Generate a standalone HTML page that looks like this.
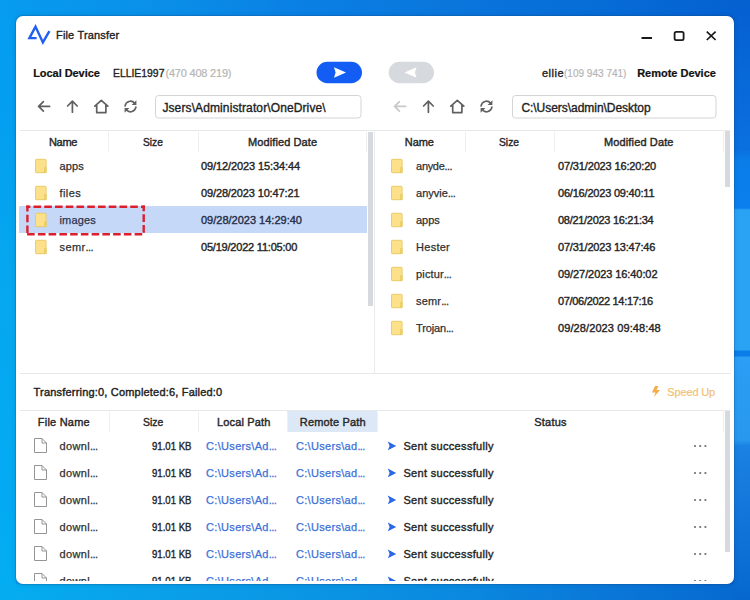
<!DOCTYPE html>
<html><head><meta charset="utf-8">
<style>
*{margin:0;padding:0;box-sizing:border-box}
html,body{width:750px;height:600px;overflow:hidden}
body{position:relative;font-family:"Liberation Sans",sans-serif;background:#0a80e6}
.a{position:absolute}
.t{position:absolute;white-space:nowrap;line-height:1}
#win{position:absolute;left:16px;top:16px;width:718px;height:568px;background:#fff;border-radius:7px;box-shadow:0 0 0 1px rgba(20,60,110,0.18),0 0 5px rgba(0,30,80,0.18)}
.hl{position:absolute;height:1px;background:#e8e8e8}
.vl{position:absolute;width:1px;background:#efefef}
</style></head><body>
<div class="a" style="left:0;top:0;width:750px;height:600px;background:linear-gradient(90deg,#069cef 0%,#0a80e4 40%,#0560d0 100%)"></div>
<div class="a" style="left:0;top:0;width:16px;height:600px;background:linear-gradient(180deg,#069cef 0px,#049ef0 100px,#06a8ef 300px,#03aaf3 500px,#04adf0 600px)"></div>
<div class="a" style="left:0;top:584px;width:750px;height:16px;background:linear-gradient(90deg,#04adf0 0px,#0aa0ea 150px,#0a96e4 300px,#0a8ae0 450px,#0a78d8 600px,#0668cf 750px)"></div>
<div class="a" style="left:0;top:0;width:750px;height:16px;background:linear-gradient(90deg,#069cef 0px,#0a90e8 150px,#0a80e4 300px,#0a76dc 450px,#066cd6 600px,#0560d0 750px)"></div>
<div class="a" style="left:734px;top:0;width:16px;height:600px;background:linear-gradient(180deg,#0560d0 0px,#0a70e0 150px,#0a7de8 160px,#0a80ee 208px,#2aa3f5 210px,#2aa3f5 350px,#0b7de8 351px,#0b7de8 356px,#2a9ff5 357px,#2898ee 440px,#1a82e2 446px,#0668cf 600px)"></div>
<div id="win"></div>
<svg class="a" style="left:0;top:0" width="750" height="581" viewBox="0 0 750 581">
<polyline points="36.6,38.1 29.4,38.1 35.5,26.6 42.9,42.4 49.4,31.2" fill="none" stroke="#1f60ee" stroke-width="2.4" stroke-linejoin="miter" stroke-linecap="butt"/>
<rect x="641.5" y="37" width="10.5" height="2" fill="#1a1a1a"/>
<rect x="674.6" y="31.8" width="9" height="8.4" rx="1.6" fill="none" stroke="#1a1a1a" stroke-width="1.8"/>
<path d="M706.8 31.6 L715.6 40 M715.6 31.6 L706.8 40" stroke="#1a1a1a" stroke-width="1.7"/>
<rect x="316.5" y="61.8" width="45.5" height="21.4" rx="10.7" fill="#135df5"/>
<path d="M334 67.2 L346 72.5 L334 77.8 L335.6 72.5 Z" fill="#fff"/>
<rect x="388.7" y="61.8" width="45.3" height="21.4" rx="10.7" fill="#d6d9de"/>
<path d="M416.5 67.2 L404.5 72.5 L416.5 77.8 L414.9 72.5 Z" fill="#fff"/>
<g fill="none" stroke="#606060" stroke-width="1.7" stroke-linecap="round" stroke-linejoin="round"><path d="M38.6 106.4 H49.6 M43.4 101.6 L38.6 106.4 L43.4 111.2"/><path d="M72.4 101.2 V112.2 M67.6 106 L72.4 101.2 L77.2 106"/><path d="M94.8 106.2 L101.3 100.4 L107.8 106.2 M96.7 105 V112.6 H105.9 V105"/><path d="M125.1 106 A5.4 5.4 0 0 1 134.6 103.2 M135.9 107 A5.4 5.4 0 0 1 126.4 109.8"/><path d="M428.4 101.2 V112.2 M423.6 106 L428.4 101.2 L433.2 106"/><path d="M450.8 106.2 L457.3 100.4 L463.8 106.2 M452.7 105 V112.6 H461.9 V105"/><path d="M481.1 106 A5.4 5.4 0 0 1 490.6 103.2 M491.9 107 A5.4 5.4 0 0 1 482.4 109.8"/></g><path d="M136.4 100.2 V105 H131.6 Z M124.6 112.8 V108 H129.4 Z" fill="#606060"/><path d="M394.6 106.4 H405.6 M399.4 101.6 L394.6 106.4 L399.4 111.2" fill="none" stroke="#c9c9c9" stroke-width="1.7" stroke-linecap="round" stroke-linejoin="round"/><path d="M492.4 100.2 V105 H487.6 Z M480.6 112.8 V108 H485.4 Z" fill="#606060"/>
<rect x="155.5" y="95.5" width="205.5" height="22.5" rx="3" fill="#fff" stroke="#d4d4d4"/>
<rect x="512.5" y="95.5" width="203.5" height="22.5" rx="3" fill="#fff" stroke="#d4d4d4"/>
<rect x="20" y="130" width="710" height="1" fill="#e8e8e8"/>
<rect x="374" y="130" width="1" height="244" fill="#ebebeb"/>
<rect x="20" y="373" width="711" height="1" fill="#e8e8e8"/>
<rect x="108" y="132" width="1" height="20" fill="#efefef"/>
<rect x="198" y="132" width="1" height="20" fill="#efefef"/>
<rect x="366" y="132" width="1" height="20" fill="#efefef"/>
<rect x="465" y="132" width="1" height="20" fill="#efefef"/>
<rect x="554" y="132" width="1" height="20" fill="#efefef"/>
<rect x="723" y="132" width="1" height="20" fill="#efefef"/>
<rect x="368" y="132" width="5" height="174" fill="#d6d9de"/>
<rect x="725" y="131" width="5" height="56" fill="#d6d9de"/>
<rect x="19" y="206" width="348" height="27" fill="#c6d8f8"/>
<rect x="35.5" y="159.3" width="10.6" height="13.4" rx="0.8" fill="#fce18a" stroke="#e6c85e" stroke-width="0.9"/><rect x="44.4" y="167.7" width="1.7" height="5" fill="#f2d264" stroke="#e6c85e" stroke-width="0.6"/>
<rect x="35.5" y="186.3" width="10.6" height="13.4" rx="0.8" fill="#fce18a" stroke="#e6c85e" stroke-width="0.9"/><rect x="44.4" y="194.7" width="1.7" height="5" fill="#f2d264" stroke="#e6c85e" stroke-width="0.6"/>
<rect x="35.5" y="213.3" width="10.6" height="13.4" rx="0.8" fill="#fce18a" stroke="#e6c85e" stroke-width="0.9"/><rect x="44.4" y="221.7" width="1.7" height="5" fill="#f2d264" stroke="#e6c85e" stroke-width="0.6"/>
<rect x="35.5" y="240.3" width="10.6" height="13.4" rx="0.8" fill="#fce18a" stroke="#e6c85e" stroke-width="0.9"/><rect x="44.4" y="248.7" width="1.7" height="5" fill="#f2d264" stroke="#e6c85e" stroke-width="0.6"/>
<rect x="391.5" y="159.3" width="10.6" height="13.4" rx="0.8" fill="#fce18a" stroke="#e6c85e" stroke-width="0.9"/><rect x="400.4" y="167.7" width="1.7" height="5" fill="#f2d264" stroke="#e6c85e" stroke-width="0.6"/>
<rect x="391.5" y="186.3" width="10.6" height="13.4" rx="0.8" fill="#fce18a" stroke="#e6c85e" stroke-width="0.9"/><rect x="400.4" y="194.7" width="1.7" height="5" fill="#f2d264" stroke="#e6c85e" stroke-width="0.6"/>
<rect x="391.5" y="213.3" width="10.6" height="13.4" rx="0.8" fill="#fce18a" stroke="#e6c85e" stroke-width="0.9"/><rect x="400.4" y="221.7" width="1.7" height="5" fill="#f2d264" stroke="#e6c85e" stroke-width="0.6"/>
<rect x="391.5" y="240.3" width="10.6" height="13.4" rx="0.8" fill="#fce18a" stroke="#e6c85e" stroke-width="0.9"/><rect x="400.4" y="248.7" width="1.7" height="5" fill="#f2d264" stroke="#e6c85e" stroke-width="0.6"/>
<rect x="391.5" y="267.3" width="10.6" height="13.4" rx="0.8" fill="#fce18a" stroke="#e6c85e" stroke-width="0.9"/><rect x="400.4" y="275.7" width="1.7" height="5" fill="#f2d264" stroke="#e6c85e" stroke-width="0.6"/>
<rect x="391.5" y="294.3" width="10.6" height="13.4" rx="0.8" fill="#fce18a" stroke="#e6c85e" stroke-width="0.9"/><rect x="400.4" y="302.7" width="1.7" height="5" fill="#f2d264" stroke="#e6c85e" stroke-width="0.6"/>
<rect x="391.5" y="321.3" width="10.6" height="13.4" rx="0.8" fill="#fce18a" stroke="#e6c85e" stroke-width="0.9"/><rect x="400.4" y="329.7" width="1.7" height="5" fill="#f2d264" stroke="#e6c85e" stroke-width="0.6"/>
<g fill="none" stroke="#dc1f2c" stroke-width="2.4" stroke-dasharray="7.6 3.15"><path d="M26.2 206.7 H144.9" stroke-dashoffset="3.45"/><path d="M143.7 205.5 V235.5" stroke-dashoffset="1.95"/><path d="M26.2 234.3 H144.9" stroke-dashoffset="9.85"/><path d="M27.4 205.5 V235.5" stroke-dashoffset="1.6"/></g>
<path d="M655 386 L652 392.5 H655.5 L654 397 L660 390 H656.5 L658.5 386 Z" fill="#f3ad4a"/>
<rect x="20" y="410" width="710" height="1" fill="#e8e8e8"/>
<rect x="287" y="411" width="90" height="21" fill="#dde8f7"/>
<rect x="109" y="412" width="1" height="20" fill="#efefef"/>
<rect x="198" y="412" width="1" height="20" fill="#efefef"/>
<rect x="287" y="412" width="1" height="20" fill="#efefef"/>
<rect x="377" y="412" width="1" height="20" fill="#efefef"/>
<rect x="723" y="412" width="1" height="20" fill="#efefef"/>
<rect x="725" y="411" width="5" height="141" fill="#d6d9de"/>
<path d="M34.5 438.5 H42 L46.5 443 V452.5 H34.5 Z M42 438.5 V443 H46.5" fill="none" stroke="#959595" stroke-width="1" stroke-linejoin="round"/>
<path d="M387.8 441.5 L396.2 446 L387.8 450.3 L389.6 446 Z" fill="#2a66e8"/>
<circle cx="695" cy="446" r="1.1" fill="#6e6e6e"/><circle cx="700.2" cy="446" r="1.1" fill="#6e6e6e"/><circle cx="705.4" cy="446" r="1.1" fill="#6e6e6e"/>
<path d="M34.5 465.5 H42 L46.5 470 V479.5 H34.5 Z M42 465.5 V470 H46.5" fill="none" stroke="#959595" stroke-width="1" stroke-linejoin="round"/>
<path d="M387.8 468.5 L396.2 473 L387.8 477.3 L389.6 473 Z" fill="#2a66e8"/>
<circle cx="695" cy="473" r="1.1" fill="#6e6e6e"/><circle cx="700.2" cy="473" r="1.1" fill="#6e6e6e"/><circle cx="705.4" cy="473" r="1.1" fill="#6e6e6e"/>
<path d="M34.5 492.5 H42 L46.5 497 V506.5 H34.5 Z M42 492.5 V497 H46.5" fill="none" stroke="#959595" stroke-width="1" stroke-linejoin="round"/>
<path d="M387.8 495.5 L396.2 500 L387.8 504.3 L389.6 500 Z" fill="#2a66e8"/>
<circle cx="695" cy="500" r="1.1" fill="#6e6e6e"/><circle cx="700.2" cy="500" r="1.1" fill="#6e6e6e"/><circle cx="705.4" cy="500" r="1.1" fill="#6e6e6e"/>
<path d="M34.5 519.5 H42 L46.5 524 V533.5 H34.5 Z M42 519.5 V524 H46.5" fill="none" stroke="#959595" stroke-width="1" stroke-linejoin="round"/>
<path d="M387.8 522.5 L396.2 527 L387.8 531.3 L389.6 527 Z" fill="#2a66e8"/>
<circle cx="695" cy="527" r="1.1" fill="#6e6e6e"/><circle cx="700.2" cy="527" r="1.1" fill="#6e6e6e"/><circle cx="705.4" cy="527" r="1.1" fill="#6e6e6e"/>
<path d="M34.5 546.5 H42 L46.5 551 V560.5 H34.5 Z M42 546.5 V551 H46.5" fill="none" stroke="#959595" stroke-width="1" stroke-linejoin="round"/>
<path d="M387.8 549.5 L396.2 554 L387.8 558.3 L389.6 554 Z" fill="#2a66e8"/>
<circle cx="695" cy="554" r="1.1" fill="#6e6e6e"/><circle cx="700.2" cy="554" r="1.1" fill="#6e6e6e"/><circle cx="705.4" cy="554" r="1.1" fill="#6e6e6e"/>
<path d="M34.5 573.5 H42 L46.5 578 V587.5 H34.5 Z M42 573.5 V578 H46.5" fill="none" stroke="#959595" stroke-width="1" stroke-linejoin="round"/>
<path d="M387.8 576.5 L396.2 581 L387.8 585.3 L389.6 581 Z" fill="#2a66e8"/>
<circle cx="695" cy="581" r="1.1" fill="#6e6e6e"/><circle cx="700.2" cy="581" r="1.1" fill="#6e6e6e"/><circle cx="705.4" cy="581" r="1.1" fill="#6e6e6e"/>
</svg>
<div class="a" style="left:0;top:0;width:750px;height:581px;overflow:hidden">
<div class="t" style="left:56.00px;top:30.00px;font-size:11px;font-weight:normal;color:#222;letter-spacing:0.167px;-webkit-text-stroke:0.35px #222;">File Transfer</div>
<div class="t" style="left:33.20px;top:68.00px;font-size:11px;font-weight:bold;color:#111;letter-spacing:-0.055px;-webkit-text-stroke:0.2px #111;">Local Device</div>
<div class="t" style="left:113.00px;top:68.00px;font-size:11px;font-weight:normal;color:#222;letter-spacing:0.000px;-webkit-text-stroke:0.35px #222;transform:scaleX(0.9444);transform-origin:0px 0;">ELLIE1997</div>
<div class="t" style="left:165.50px;top:68.00px;font-size:11px;font-weight:normal;color:#b5b5b5;letter-spacing:-0.208px;-webkit-text-stroke:0.2px #b5b5b5;">(470 408 219)</div>
<div class="t" style="left:542.00px;top:68.00px;font-size:11px;font-weight:normal;color:#222;letter-spacing:0.500px;-webkit-text-stroke:0.35px #222;">ellie</div>
<div class="t" style="left:564.00px;top:68.00px;font-size:11px;font-weight:normal;color:#b5b5b5;letter-spacing:0.000px;-webkit-text-stroke:0.2px #b5b5b5;transform:scaleX(0.9118);transform-origin:0px 0;">(109 943 741)</div>
<div class="t" style="left:637.20px;top:68.00px;font-size:11px;font-weight:bold;color:#111;letter-spacing:-0.017px;-webkit-text-stroke:0.2px #111;">Remote Device</div>
<div class="t" style="left:162.40px;top:102.00px;font-size:12px;font-weight:normal;color:#222;letter-spacing:0.114px;-webkit-text-stroke:0.35px #222;">Jsers\Administrator\OneDrive\</div>
<div class="t" style="left:521.40px;top:102.00px;font-size:12px;font-weight:normal;color:#222;letter-spacing:-0.038px;-webkit-text-stroke:0.35px #222;">C:\Users\admin\Desktop</div>
<div class="t" style="left:48.90px;top:137.00px;font-size:11px;font-weight:normal;color:#262626;letter-spacing:-0.267px;-webkit-text-stroke:0.4px #262626;">Name</div>
<div class="t" style="left:143.20px;top:137.00px;font-size:11px;font-weight:normal;color:#262626;letter-spacing:0.000px;-webkit-text-stroke:0.4px #262626;transform:scaleX(0.9273);transform-origin:0px 0;">Size</div>
<div class="t" style="left:248.00px;top:137.00px;font-size:11px;font-weight:normal;color:#262626;letter-spacing:0.100px;-webkit-text-stroke:0.4px #262626;">Modified Date</div>
<div class="t" style="left:404.80px;top:137.00px;font-size:11px;font-weight:normal;color:#262626;letter-spacing:-0.067px;-webkit-text-stroke:0.4px #262626;">Name</div>
<div class="t" style="left:499.40px;top:137.00px;font-size:11px;font-weight:normal;color:#262626;letter-spacing:0.000px;-webkit-text-stroke:0.4px #262626;transform:scaleX(0.9364);transform-origin:0px 0;">Size</div>
<div class="t" style="left:604.00px;top:137.00px;font-size:11px;font-weight:normal;color:#262626;letter-spacing:0.133px;-webkit-text-stroke:0.4px #262626;">Modified Date</div>
<div class="t" style="left:59.50px;top:161.00px;font-size:11px;font-weight:normal;color:#303030;letter-spacing:0.133px;-webkit-text-stroke:0.25px #303030;">apps</div>
<div class="t" style="left:201.00px;top:161.00px;font-size:11px;font-weight:normal;color:#262626;letter-spacing:-0.100px;-webkit-text-stroke:0.4px #262626;">09/12/2023 15:34:44</div>
<div class="t" style="left:59.50px;top:188.00px;font-size:11px;font-weight:normal;color:#303030;letter-spacing:0.425px;-webkit-text-stroke:0.25px #303030;">files</div>
<div class="t" style="left:201.00px;top:188.00px;font-size:11px;font-weight:normal;color:#262626;letter-spacing:-0.133px;-webkit-text-stroke:0.4px #262626;">09/28/2023 10:47:21</div>
<div class="t" style="left:59.50px;top:215.00px;font-size:11px;font-weight:normal;color:#2c3550;letter-spacing:0.140px;-webkit-text-stroke:0.25px #2c3550;">images</div>
<div class="t" style="left:201.00px;top:215.00px;font-size:11px;font-weight:normal;color:#26304a;letter-spacing:0.000px;-webkit-text-stroke:0.4px #26304a;">09/28/2023 14:29:40</div>
<div class="t" style="left:59.50px;top:242.00px;font-size:11px;font-weight:normal;color:#303030;letter-spacing:0.400px;-webkit-text-stroke:0.25px #303030;">semr<span style="letter-spacing:-0.6px">...</span></div>
<div class="t" style="left:201.00px;top:242.00px;font-size:11px;font-weight:normal;color:#262626;letter-spacing:-0.211px;-webkit-text-stroke:0.4px #262626;">05/19/2022 11:05:00</div>
<div class="t" style="left:416.10px;top:161.00px;font-size:11px;font-weight:normal;color:#303030;letter-spacing:-0.320px;-webkit-text-stroke:0.25px #303030;">anyde<span style="letter-spacing:-0.6px">...</span></div>
<div class="t" style="left:558.00px;top:161.00px;font-size:11px;font-weight:normal;color:#262626;letter-spacing:-0.150px;-webkit-text-stroke:0.4px #262626;">07/31/2023 16:20:20</div>
<div class="t" style="left:416.10px;top:188.00px;font-size:11px;font-weight:normal;color:#303030;letter-spacing:-0.017px;-webkit-text-stroke:0.25px #303030;">anyvie<span style="letter-spacing:-0.6px">...</span></div>
<div class="t" style="left:558.00px;top:188.00px;font-size:11px;font-weight:normal;color:#262626;letter-spacing:-0.200px;-webkit-text-stroke:0.4px #262626;">06/16/2023 09:40:11</div>
<div class="t" style="left:416.10px;top:215.00px;font-size:11px;font-weight:normal;color:#303030;letter-spacing:-0.100px;-webkit-text-stroke:0.25px #303030;">apps</div>
<div class="t" style="left:558.00px;top:215.00px;font-size:11px;font-weight:normal;color:#262626;letter-spacing:-0.289px;-webkit-text-stroke:0.4px #262626;">08/21/2023 16:21:34</div>
<div class="t" style="left:416.10px;top:242.00px;font-size:11px;font-weight:normal;color:#303030;letter-spacing:0.240px;-webkit-text-stroke:0.25px #303030;">Hester</div>
<div class="t" style="left:558.00px;top:242.00px;font-size:11px;font-weight:normal;color:#262626;letter-spacing:-0.200px;-webkit-text-stroke:0.4px #262626;">07/31/2023 13:47:46</div>
<div class="t" style="left:416.10px;top:269.00px;font-size:11px;font-weight:normal;color:#303030;letter-spacing:0.133px;-webkit-text-stroke:0.25px #303030;">pictur<span style="letter-spacing:-0.6px">...</span></div>
<div class="t" style="left:558.00px;top:269.00px;font-size:11px;font-weight:normal;color:#262626;letter-spacing:-0.078px;-webkit-text-stroke:0.4px #262626;">09/27/2023 16:40:02</div>
<div class="t" style="left:416.10px;top:296.00px;font-size:11px;font-weight:normal;color:#303030;letter-spacing:0.150px;-webkit-text-stroke:0.25px #303030;">semr<span style="letter-spacing:-0.6px">...</span></div>
<div class="t" style="left:558.00px;top:296.00px;font-size:11px;font-weight:normal;color:#262626;letter-spacing:-0.322px;-webkit-text-stroke:0.4px #262626;">07/06/2022 14:17:16</div>
<div class="t" style="left:416.10px;top:323.00px;font-size:11px;font-weight:normal;color:#303030;letter-spacing:-0.167px;-webkit-text-stroke:0.25px #303030;">Trojan<span style="letter-spacing:-0.6px">...</span></div>
<div class="t" style="left:558.00px;top:323.00px;font-size:11px;font-weight:normal;color:#262626;letter-spacing:0.100px;-webkit-text-stroke:0.4px #262626;">09/28/2023 09:48:48</div>
<div class="t" style="left:33.60px;top:387.00px;font-size:11px;font-weight:normal;color:#222;letter-spacing:0.189px;-webkit-text-stroke:0.4px #222;">Transferring:0, Completed:6, Failed:0</div>
<div class="t" style="left:667.30px;top:387.00px;font-size:11px;font-weight:normal;color:#f2bf72;letter-spacing:-0.143px;-webkit-text-stroke:0.2px #f2bf72;">Speed Up</div>
<div class="t" style="left:37.80px;top:416.50px;font-size:11px;font-weight:normal;color:#262626;letter-spacing:0.225px;-webkit-text-stroke:0.4px #262626;">File Name</div>
<div class="t" style="left:143.00px;top:416.50px;font-size:11px;font-weight:normal;color:#262626;letter-spacing:0.000px;-webkit-text-stroke:0.4px #262626;transform:scaleX(0.9455);transform-origin:0px 0;">Size</div>
<div class="t" style="left:217.00px;top:416.50px;font-size:11px;font-weight:normal;color:#262626;letter-spacing:0.156px;-webkit-text-stroke:0.4px #262626;">Local Path</div>
<div class="t" style="left:299.80px;top:416.50px;font-size:11px;font-weight:normal;color:#262626;letter-spacing:0.170px;-webkit-text-stroke:0.4px #262626;">Remote Path</div>
<div class="t" style="left:534.30px;top:416.50px;font-size:11px;font-weight:normal;color:#262626;letter-spacing:0.200px;-webkit-text-stroke:0.4px #262626;">Status</div>
<div class="t" style="left:59.50px;top:441.00px;font-size:11px;font-weight:normal;color:#303030;letter-spacing:0.360px;-webkit-text-stroke:0.25px #303030;">downl<span style="letter-spacing:-0.6px">...</span></div>
<div class="t" style="left:152.00px;top:441.00px;font-size:11px;font-weight:normal;color:#262626;letter-spacing:0.000px;-webkit-text-stroke:0.4px #262626;transform:scaleX(0.8711);transform-origin:0px 0;">91.01 KB</div>
<div class="t" style="left:206.10px;top:441.00px;font-size:11px;font-weight:normal;color:#3c6fd8;letter-spacing:0.309px;-webkit-text-stroke:0.25px #3c6fd8;">C:\Users\Ad<span style="letter-spacing:-0.6px">...</span></div>
<div class="t" style="left:296.00px;top:441.00px;font-size:11px;font-weight:normal;color:#3c6fd8;letter-spacing:0.300px;-webkit-text-stroke:0.25px #3c6fd8;">C:\Users\ad<span style="letter-spacing:-0.6px">...</span></div>
<div class="t" style="left:403.40px;top:441.00px;font-size:11px;font-weight:normal;color:#262626;letter-spacing:0.325px;-webkit-text-stroke:0.4px #262626;">Sent successfully</div>
<div class="t" style="left:59.50px;top:468.00px;font-size:11px;font-weight:normal;color:#303030;letter-spacing:0.360px;-webkit-text-stroke:0.25px #303030;">downl<span style="letter-spacing:-0.6px">...</span></div>
<div class="t" style="left:152.00px;top:468.00px;font-size:11px;font-weight:normal;color:#262626;letter-spacing:0.000px;-webkit-text-stroke:0.4px #262626;transform:scaleX(0.8711);transform-origin:0px 0;">91.01 KB</div>
<div class="t" style="left:206.10px;top:468.00px;font-size:11px;font-weight:normal;color:#3c6fd8;letter-spacing:0.309px;-webkit-text-stroke:0.25px #3c6fd8;">C:\Users\Ad<span style="letter-spacing:-0.6px">...</span></div>
<div class="t" style="left:296.00px;top:468.00px;font-size:11px;font-weight:normal;color:#3c6fd8;letter-spacing:0.300px;-webkit-text-stroke:0.25px #3c6fd8;">C:\Users\ad<span style="letter-spacing:-0.6px">...</span></div>
<div class="t" style="left:403.40px;top:468.00px;font-size:11px;font-weight:normal;color:#262626;letter-spacing:0.325px;-webkit-text-stroke:0.4px #262626;">Sent successfully</div>
<div class="t" style="left:59.50px;top:495.00px;font-size:11px;font-weight:normal;color:#303030;letter-spacing:0.360px;-webkit-text-stroke:0.25px #303030;">downl<span style="letter-spacing:-0.6px">...</span></div>
<div class="t" style="left:152.00px;top:495.00px;font-size:11px;font-weight:normal;color:#262626;letter-spacing:0.000px;-webkit-text-stroke:0.4px #262626;transform:scaleX(0.8711);transform-origin:0px 0;">91.01 KB</div>
<div class="t" style="left:206.10px;top:495.00px;font-size:11px;font-weight:normal;color:#3c6fd8;letter-spacing:0.309px;-webkit-text-stroke:0.25px #3c6fd8;">C:\Users\Ad<span style="letter-spacing:-0.6px">...</span></div>
<div class="t" style="left:296.00px;top:495.00px;font-size:11px;font-weight:normal;color:#3c6fd8;letter-spacing:0.300px;-webkit-text-stroke:0.25px #3c6fd8;">C:\Users\ad<span style="letter-spacing:-0.6px">...</span></div>
<div class="t" style="left:403.40px;top:495.00px;font-size:11px;font-weight:normal;color:#262626;letter-spacing:0.325px;-webkit-text-stroke:0.4px #262626;">Sent successfully</div>
<div class="t" style="left:59.50px;top:522.00px;font-size:11px;font-weight:normal;color:#303030;letter-spacing:0.360px;-webkit-text-stroke:0.25px #303030;">downl<span style="letter-spacing:-0.6px">...</span></div>
<div class="t" style="left:152.00px;top:522.00px;font-size:11px;font-weight:normal;color:#262626;letter-spacing:0.000px;-webkit-text-stroke:0.4px #262626;transform:scaleX(0.8711);transform-origin:0px 0;">91.01 KB</div>
<div class="t" style="left:206.10px;top:522.00px;font-size:11px;font-weight:normal;color:#3c6fd8;letter-spacing:0.309px;-webkit-text-stroke:0.25px #3c6fd8;">C:\Users\Ad<span style="letter-spacing:-0.6px">...</span></div>
<div class="t" style="left:296.00px;top:522.00px;font-size:11px;font-weight:normal;color:#3c6fd8;letter-spacing:0.300px;-webkit-text-stroke:0.25px #3c6fd8;">C:\Users\ad<span style="letter-spacing:-0.6px">...</span></div>
<div class="t" style="left:403.40px;top:522.00px;font-size:11px;font-weight:normal;color:#262626;letter-spacing:0.325px;-webkit-text-stroke:0.4px #262626;">Sent successfully</div>
<div class="t" style="left:59.50px;top:549.00px;font-size:11px;font-weight:normal;color:#303030;letter-spacing:0.360px;-webkit-text-stroke:0.25px #303030;">downl<span style="letter-spacing:-0.6px">...</span></div>
<div class="t" style="left:152.00px;top:549.00px;font-size:11px;font-weight:normal;color:#262626;letter-spacing:0.000px;-webkit-text-stroke:0.4px #262626;transform:scaleX(0.8711);transform-origin:0px 0;">91.01 KB</div>
<div class="t" style="left:206.10px;top:549.00px;font-size:11px;font-weight:normal;color:#3c6fd8;letter-spacing:0.309px;-webkit-text-stroke:0.25px #3c6fd8;">C:\Users\Ad<span style="letter-spacing:-0.6px">...</span></div>
<div class="t" style="left:296.00px;top:549.00px;font-size:11px;font-weight:normal;color:#3c6fd8;letter-spacing:0.300px;-webkit-text-stroke:0.25px #3c6fd8;">C:\Users\ad<span style="letter-spacing:-0.6px">...</span></div>
<div class="t" style="left:403.40px;top:549.00px;font-size:11px;font-weight:normal;color:#262626;letter-spacing:0.325px;-webkit-text-stroke:0.4px #262626;">Sent successfully</div>
<div class="t" style="left:59.50px;top:576.00px;font-size:11px;font-weight:normal;color:#303030;letter-spacing:0.360px;-webkit-text-stroke:0.25px #303030;">downl<span style="letter-spacing:-0.6px">...</span></div>
<div class="t" style="left:152.00px;top:576.00px;font-size:11px;font-weight:normal;color:#262626;letter-spacing:0.000px;-webkit-text-stroke:0.4px #262626;transform:scaleX(0.8711);transform-origin:0px 0;">91.01 KB</div>
<div class="t" style="left:206.10px;top:576.00px;font-size:11px;font-weight:normal;color:#3c6fd8;letter-spacing:0.309px;-webkit-text-stroke:0.25px #3c6fd8;">C:\Users\Ad<span style="letter-spacing:-0.6px">...</span></div>
<div class="t" style="left:296.00px;top:576.00px;font-size:11px;font-weight:normal;color:#3c6fd8;letter-spacing:0.300px;-webkit-text-stroke:0.25px #3c6fd8;">C:\Users\ad<span style="letter-spacing:-0.6px">...</span></div>
<div class="t" style="left:403.40px;top:576.00px;font-size:11px;font-weight:normal;color:#262626;letter-spacing:0.325px;-webkit-text-stroke:0.4px #262626;">Sent successfully</div>
</div>
</body></html>
